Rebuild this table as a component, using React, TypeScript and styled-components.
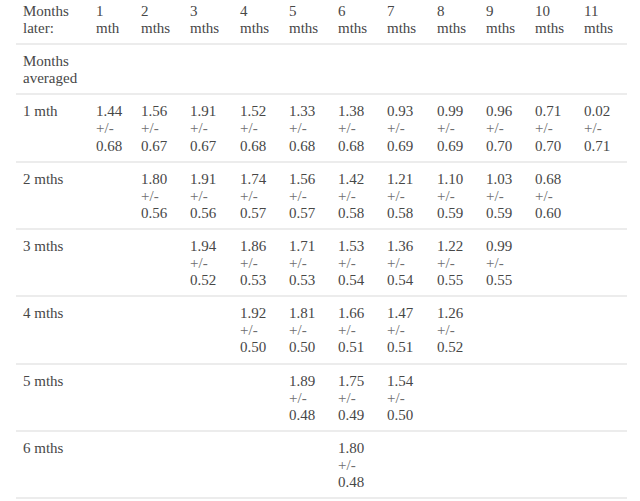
import React from "react";
import styled, { createGlobalStyle } from "styled-components";

const GlobalStyle = createGlobalStyle`
  body {
    margin: 0;
    background: #fff;
    overflow: hidden;
  }
`;

const Table = styled.table`
  margin: -5px 0 0 16px;
  width: 611px;
  table-layout: fixed;
  border-collapse: collapse;
  font-family: "Liberation Serif", "DejaVu Serif", serif;
  font-size: 15px;
  line-height: 17.1px;
  color: #474747;
`;

const Row = styled.tr`
  border-bottom: 2px solid #ececec;
`;

const Cell = styled.td`
  padding: 8px 7px 6px;
  vertical-align: top;
  text-align: left;
  font-weight: normal;
`;

const HeadCell = styled(Cell).attrs({ as: "th" })``;

const Value = styled.div``;

const Spread = styled.div`
  color: #6e6e6e;
`;

const widths = [73, 45, 49, 50, 49, 49, 49, 50, 49, 49, 49, 50];

type Entry = [string, string] | null;

const rows: { label: string; values: Entry[] }[] = [
  {
    label: "1 mth",
    values: [
      ["1.44", "0.68"], ["1.56", "0.67"], ["1.91", "0.67"], ["1.52", "0.68"],
      ["1.33", "0.68"], ["1.38", "0.68"], ["0.93", "0.69"], ["0.99", "0.69"],
      ["0.96", "0.70"], ["0.71", "0.70"], ["0.02", "0.71"],
    ],
  },
  {
    label: "2 mths",
    values: [
      null, ["1.80", "0.56"], ["1.91", "0.56"], ["1.74", "0.57"], ["1.56", "0.57"],
      ["1.42", "0.58"], ["1.21", "0.58"], ["1.10", "0.59"], ["1.03", "0.59"],
      ["0.68", "0.60"], null,
    ],
  },
  {
    label: "3 mths",
    values: [
      null, null, ["1.94", "0.52"], ["1.86", "0.53"], ["1.71", "0.53"],
      ["1.53", "0.54"], ["1.36", "0.54"], ["1.22", "0.55"], ["0.99", "0.55"],
      null, null,
    ],
  },
  {
    label: "4 mths",
    values: [
      null, null, null, ["1.92", "0.50"], ["1.81", "0.50"], ["1.66", "0.51"],
      ["1.47", "0.51"], ["1.26", "0.52"], null, null, null,
    ],
  },
  {
    label: "5 mths",
    values: [
      null, null, null, null, ["1.89", "0.48"], ["1.75", "0.49"], ["1.54", "0.50"],
      null, null, null, null,
    ],
  },
  {
    label: "6 mths",
    values: [
      null, null, null, null, null, ["1.80", "0.48"], null, null, null, null, null,
    ],
  },
];

const later = ["1 mth", "2 mths", "3 mths", "4 mths", "5 mths", "6 mths", "7 mths", "8 mths", "9 mths", "10 mths", "11 mths"];

export default function App() {
  return (
    <>
      <GlobalStyle />
      <Table>
        <colgroup>
          {widths.map((w, i) => (
            <col key={i} style={{ width: w }} />
          ))}
        </colgroup>
        <thead>
          <Row>
            <HeadCell>Months later:</HeadCell>
            {later.map((l) => (
              <HeadCell key={l}>{l}</HeadCell>
            ))}
          </Row>
        </thead>
        <tbody>
          <Row>
            <Cell>Months averaged</Cell>
            {later.map((l) => (
              <Cell key={l} />
            ))}
          </Row>
          {rows.map((r) => (
            <Row key={r.label}>
              <Cell>{r.label}</Cell>
              {r.values.map((v, i) => (
                <Cell key={i}>
                  {v && (
                    <>
                      <Value>{v[0]}</Value>
                      <Spread>+/-</Spread>
                      <Value>{v[1]}</Value>
                    </>
                  )}
                </Cell>
              ))}
            </Row>
          ))}
        </tbody>
      </Table>
    </>
  );
}
